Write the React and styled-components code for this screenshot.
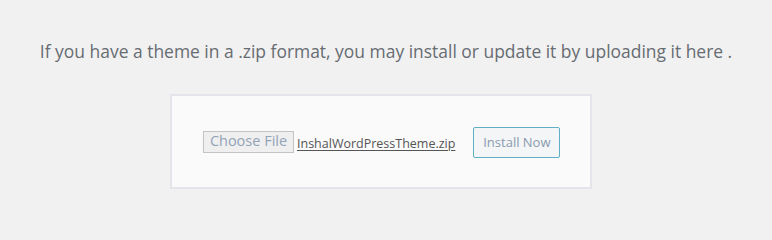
import React from "react";
import styled, { createGlobalStyle } from "styled-components";

const Global = createGlobalStyle`
  html, body { margin: 0; background: #f1f1f1; }
  * { box-sizing: border-box; }
`;

const Page = styled.div`
  width: 772px;
  height: 225px;
  padding-top: 39px;
  font-family: "Open Sans", "Noto Sans", sans-serif;
`;

const Help = styled.p`
  margin: 0 0 31px;
  text-align: center;
  font-size: 17.45px;
  line-height: 24px;
  color: #676c72;
  white-space: nowrap;
`;

const Form = styled.form`
  margin: 0 0 0 170px;
  width: 422px;
  height: 95px;
  background: #fafafa;
  border: 2px solid #e4e4ea;
  display: flex;
  align-items: center;
  padding: 0 0 0 31px;
  gap: 18px;
`;

const FileField = styled.div`
  display: flex;
  align-items: center;
  gap: 3px;
`;

const ChooseButton = styled.span`
  display: inline-flex;
  align-items: center;
  justify-content: center;
  width: 91px;
  height: 22px;
  background: #efefef;
  border: 1px solid #c4c4c4;
  color: #93a3b8;
  font-size: 14.5px;
  line-height: 1;
`;

const FileName = styled.span`
  font-size: 12.5px;
  color: #555;
  text-decoration: underline;
  text-underline-offset: 2px;
  margin-top: 3px;
`;

const InstallButton = styled.div`
  display: flex;
  align-items: center;
  justify-content: center;
  width: 87px;
  height: 31px;
  background: #f3f5f6;
  border: 1px solid #5fb0c6;
  border-radius: 2px;
  color: #8a9bb0;
  font-size: 13px;
  margin-top: 1px;
  cursor: pointer;
`;

export default function App() {
  return (
    <>
      <Global />
      <Page>
        <Help>If you have a theme in a .zip format, you may install or update it by uploading it here .</Help>
        <Form onSubmit={(e) => e.preventDefault()}>
          <FileField>
            <ChooseButton>Choose File</ChooseButton>
            <FileName>InshalWordPressTheme.zip</FileName>
          </FileField>
          <InstallButton role="button">Install Now</InstallButton>
        </Form>
      </Page>
    </>
  );
}
